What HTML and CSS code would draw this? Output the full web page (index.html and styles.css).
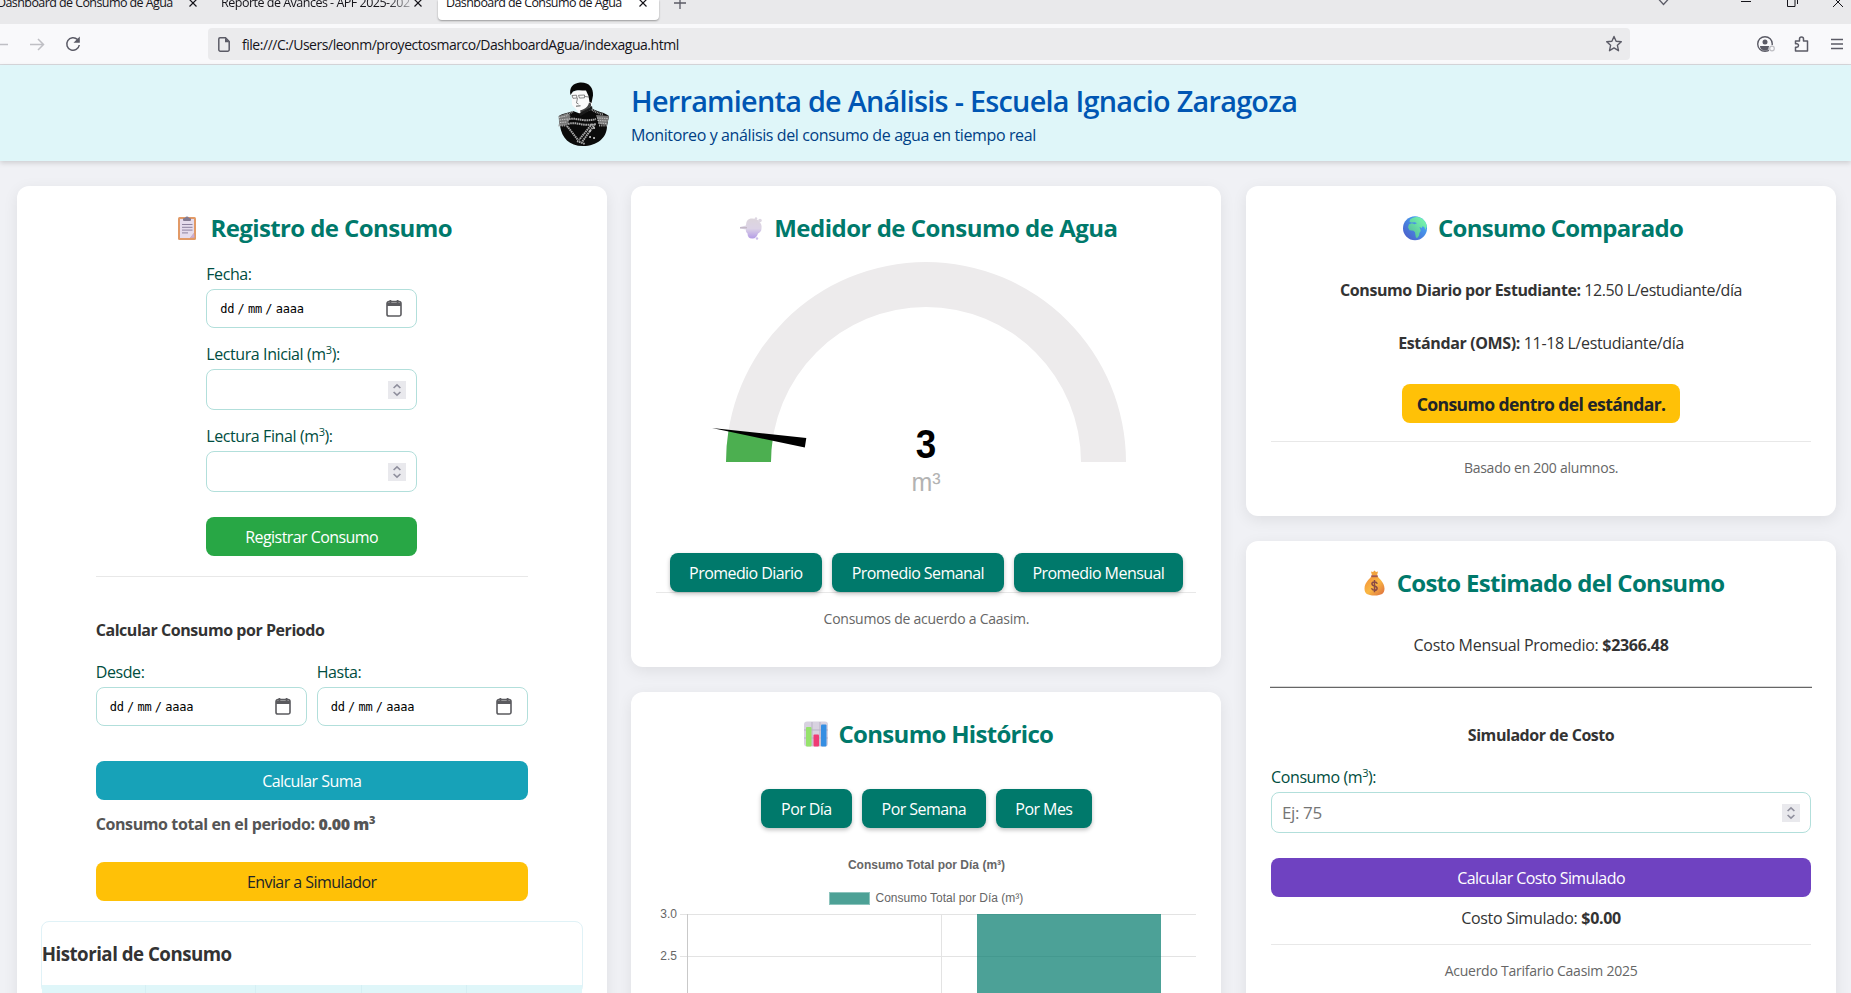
FILE: index.html
```html
<!DOCTYPE html>
<html lang="es">
<head>
<meta charset="utf-8">
<title>Dashboard de Consumo de Agua</title>
<link rel="stylesheet" href="styles.css">
</head>
<body>
<svg class="defs" width="0" height="0">
  <defs>
    <symbol id="calendar" viewBox="0 0 16 17"><path d="M3 1.500h10a2 2 0 0 1 2 2v10.700a1.800 1.800 0 0 1-1.800 1.800H2.800A1.800 1.800 0 0 1 1 14.200V3.500a2 2 0 0 1 2-2z" fill="none" stroke="#5b5b5f" stroke-width="1.600"/><path d="M1 2.500h14v3.500H1zM3.500 0h1.800v3H3.500zM10.700 0h1.800v3h-1.800z" fill="#5b5b5f"/></symbol>
    <symbol id="spin" viewBox="0 0 18 18"><path d="M0 0h18v18H0z" fill="#e9e9ed"/><path d="M5.600 7 9 3.800 12.400 7M5.600 11 9 14.200 12.400 11" fill="none" stroke="#8f8f9d" stroke-width="1.600"/></symbol>
    <linearGradient id="globeSea" x1="1" y1="0" x2="0" y2="1"><stop offset="0" stop-color="#42b8ff"/><stop offset="1" stop-color="#4d55c4"/></linearGradient>
    <linearGradient id="globeLand" x1="1" y1="0" x2="0" y2="1"><stop offset="0" stop-color="#7dffb0"/><stop offset="1" stop-color="#4fb39a"/></linearGradient>
    <linearGradient id="bagGold" x1="0" y1="0" x2="1" y2="1"><stop offset="0" stop-color="#f28c3c"/><stop offset=".5" stop-color="#fab843"/><stop offset="1" stop-color="#dc6b3e"/></linearGradient>
    <linearGradient id="puff" x1="0" y1="0" x2="0" y2="1"><stop offset="0" stop-color="#dcd5dc"/><stop offset=".5" stop-color="#dcd3e6"/><stop offset="1" stop-color="#b39be6"/></linearGradient>
  </defs>
</svg>

<div class="browser">
  <div class="tabs">
    <div class="tab tab-first"><span class="tab-name">Dashboard de Consumo de Agua</span><svg class="tab-x" viewBox="0 0 8 8"><path d="M.5.500l7 7M7.500.500l-7 7"/></svg></div>
    <div class="tab tab-second"><span class="tab-name">Reporte de Avances - APF 2025-202</span><svg class="tab-x" viewBox="0 0 8 8"><path d="M.5.500l7 7M7.500.500l-7 7"/></svg></div>
    <div class="tab tab-active"><span class="tab-name">Dashboard de Consumo de Agua</span><svg class="tab-x" viewBox="0 0 8 8"><path d="M.5.500l7 7M7.500.500l-7 7"/></svg></div>
    <svg class="tab-new" width="12" height="12" viewBox="0 0 12 12"><path d="M6 0v12M0 6h12" stroke="#5b5b66" stroke-width="1.300"/></svg>
    <svg class="window-controls" width="200" height="24" viewBox="0 0 200 24" fill="none">
      <path d="M7.500-1l5 5.500 5-5.500" stroke="#5b5b66" stroke-width="1.300"/>
      <path d="M90 1.500h10" stroke="#15141a"/>
      <path d="M136.500-2v8.500h7.500V-2M146.500-2v6" stroke="#15141a"/>
      <path d="M182-3l10 10M192-3l-10 10" stroke="#15141a"/>
    </svg>
  </div>
  <div class="toolbar">
    <svg class="nav-icons" width="90" height="40" viewBox="0 0 90 40" fill="none">
      <path d="M-5 20.500H8" stroke="#bfbfc4" stroke-width="1.500"/>
      <path d="M30 20.500h13M38 15l5.500 5.500L38 26" stroke="#bfbfc4" stroke-width="1.500"/>
      <path d="M77.500 15.500A6.300 6.300 0 1 0 79.300 21" stroke="#5b5b66" stroke-width="1.500"/><path d="M79.800 12.500v6.300h-6.300z" fill="#5b5b66"/>
    </svg>
    <div class="urlbar">
      <svg width="12" height="15" viewBox="0 0 12 15"><path d="M2 .8h5.500L11.200 4.500v8.200a1.500 1.500 0 0 1-1.500 1.500H2.300a1.500 1.500 0 0 1-1.500-1.500V2A1.200 1.200 0 0 1 2 .8z" fill="none" stroke="#5b5b66" stroke-width="1.500"/><path d="M7 .8v4.400h4.500z" fill="#5b5b66"/></svg>
      <span class="url">file:///C:/Users/leonm/proyectosmarco/DashboardAgua/indexagua.html</span>
      <svg class="star" width="18" height="18" viewBox="0 0 18 18"><path d="M9 1.500l2.100 4.800 5.200.5-3.900 3.500 1.100 5.400L9 12.900l-4.500 2.800 1.100-5.400-3.900-3.500 5.200-.5z" fill="none" stroke="#5b5b66" stroke-width="1.400" stroke-linejoin="round"/></svg>
    </div>
    <svg class="tool-icons" width="110" height="40" viewBox="0 0 110 40" fill="none">
      <circle cx="24" cy="20" r="7.300" stroke="#5b5b66" stroke-width="1.400"/><circle cx="24" cy="18" r="2.500" fill="#5b5b66"/><path d="M19 22h10c0 3-2.500 4.500-5 4.500S19 25 19 22z" fill="#5b5b66"/><circle cx="31" cy="24.500" r="3.500" fill="#f9f9fb"/><circle cx="31" cy="24.500" r="2.300" stroke="#bfbfc4" stroke-width="1.200"/>
      <path d="M54.500 17h4v-2a2 2 0 0 1 4 0v2h4v10h-12v-3.800h1.300a1.700 1.700 0 0 0 0-3.400h-1.300z" stroke="#5b5b66" stroke-width="1.500" stroke-linejoin="round"/>
      <path d="M90 15.500h12M90 20h12M90 24.500h12" stroke="#5b5b66" stroke-width="1.300"/>
    </svg>
  </div>
</div>

<header class="site-header">
  <svg class="portrait" width="57" height="76" viewBox="5 -1 57 76">
    <path d="M10 40c4-3 9-3 14-5l8 3 12-5c5 3 11 3 16 7l-2 10c0 12-10 20-24 20S13 62 11 50z" fill="#0b0b0b"/>
    <path d="M9.500 40l9-3 3 3-3 9-8 1zM47 39l13 1-2 9-8-1z" fill="#777"/>
    <path d="M10 41.500l9-2M10.500 44l8-1M11 46.500l7-.5M48 42l11 .5M48.500 44.500l10 .5M49 47l9 .5" stroke="#c4c4c4" stroke-dasharray="1.500 .8"/>
    <path d="M9.500 49.500l8 0M50 49.500l8 0M24 35.500l-7 4M43 34l6 3 5 1.500" stroke="#a0a0a0" stroke-width="2" stroke-dasharray="1 .8"/>
    <path d="M18 44c8-4 15 3 29-1M19 48c8-3 15 3 28 0M46 48 33 66M43 48 30 64M18 50l11 14M28 65l8 3" stroke="#a8a8a8" stroke-width="2" fill="none" stroke-dasharray="1.600 .6"/>
    <path d="M41 55h.1M45 52h.1M41 61h.1M45 62h.1" stroke="#ccc" stroke-width="2" stroke-linecap="round"/>
    <path d="M22.500 17l.5 12 3 3 5 6 12-9V16l-8-3-8 2z" fill="#fafafa"/>
    <path d="M21.500 19C19.800 12 24 7 31 6.500c9-.5 13.500 5 13 13l-1.500 7.500-2-1-1-6-2.500-5.500c-5 0-9-1-13 1z" fill="#070707"/>
    <path d="M23 19.500l4.500-.3.500 2.800-4 .3zM29.500 19.300l6-.3v2.800l-5 .3zM36 20.500l4 .5M28.500 22l-1 5 2 1" stroke="#555" stroke-width=".7" fill="none"/>
    <path d="M27 30.200l4.500-.4" stroke="#444" stroke-width=".9"/>
    <path d="M31 34.500c4-1 8-3 9-8l2 1v3l-10 7z" fill="#444"/>
    <path d="M30 37.500l13-7.500.5 3-12 7z" fill="#1b1b1b"/>
  </svg>
  <div class="header-text">
    <h1>Herramienta de Análisis - Escuela Ignacio Zaragoza</h1>
    <p>Monitoreo y análisis del consumo de agua en tiempo real</p>
  </div>
</header>

<main class="dashboard">
  <div class="column">
    <section class="card">
      <h2 class="t-registro">
        <svg class="emoji" width="24" height="26" viewBox="0 0 24 26"><rect x="3" y="2" width="18" height="23" rx="1.500" fill="#e29a67"/><path d="M5 4h14v14l-4 5H5z" fill="#e5dced"/><path d="M19 18l-4 5 4.500-.5z" fill="#c8aed8"/><path d="M8 5V3.500l2.200-.7a1.900 1.900 0 0 1 3.600 0l2.200.7V5a1 1 0 0 1-1 1H9a1 1 0 0 1-1-1z" fill="#837b91"/><path d="M7 9.500h10.500M7 12.300h10.500M7 15.100h10.500M7 17.900h6" stroke="#8d829f" stroke-width="1"/></svg>
        <span>Registro de Consumo</span></h2>
      <div class="form-narrow">
        <label>Fecha:</label>
        <div class="field date"><span>dd / mm / aaaa</span><svg width="16" height="17"><use href="#calendar"/></svg></div>
        <label>Lectura Inicial (m<sup>3</sup>):</label>
        <div class="field number"><span></span><svg width="18" height="18"><use href="#spin"/></svg></div>
        <label>Lectura Final (m<sup>3</sup>):</label>
        <div class="field number"><span></span><svg width="18" height="18"><use href="#spin"/></svg></div>
        <button class="btn green">Registrar Consumo</button>
      </div>
      <div class="period">
        <h4>Calcular Consumo por Periodo</h4>
        <div class="pair">
          <div><label>Desde:</label><div class="field date"><span>dd / mm / aaaa</span><svg width="16" height="17"><use href="#calendar"/></svg></div></div>
          <div><label>Hasta:</label><div class="field date"><span>dd / mm / aaaa</span><svg width="16" height="17"><use href="#calendar"/></svg></div></div>
        </div>
        <button class="btn cyan">Calcular Suma</button>
        <p class="total">Consumo total en el periodo: <b>0.00 m<sup>3</sup></b></p>
        <button class="btn amber">Enviar a Simulador</button>
      </div>
      <div class="history">
        <h3>Historial de Consumo</h3>
        <div class="history-head"><i></i><i></i><i></i><i></i><i></i></div>
      </div>
    </section>
  </div>

  <div class="column">
    <section class="card meter">
      <h2 class="t-medidor">
        <svg class="emoji" width="24" height="26" viewBox="0 0 24 26"><path d="M1 12l6-1.500C7 6 9 3.500 13 3.500c4 0 6 1 7 3 2 1.500 3 4 2.500 7 0 3-2 4-3.500 5-1 3-3 5.500-6 5-3 0-4.500-2-4.500-5C7 17 6.500 16 7 14.500L1 13.500z" fill="url(#puff)"/><circle cx="17" cy="3.500" r="1.200" fill="#ddd6e2"/><circle cx="21" cy="5.500" r="1.800" fill="#ddd6e2"/><circle cx="18" cy="23.500" r="1.200" fill="#cbbdeb"/><path d="M1 12.800h7" stroke="#b9aebb"/></svg>
        <span>Medidor de Consumo de Agua</span></h2>
      <svg class="gauge" width="540" height="307" viewBox="656 246 540 307">
        <path d="M726 462A200 200 0 0 1 1126 462H1081A155 155 0 0 0 771 462z" fill="#edebec"/>
        <path d="M726 462A200 200 0 0 1 728.460 430.710L772.900 437.750A155 155 0 0 0 771 462z" fill="#4caf50"/>
        <path d="M712 428l94.300 10-1.500 9.600z"/>
        <text class="gauge-value" x="926" y="457.500" text-anchor="middle" textLength="20.500" lengthAdjust="spacingAndGlyphs">3</text>
        <text class="gauge-unit" x="926" y="491" text-anchor="middle">m³</text>
      </svg>
      <div class="buttons wide"><button class="btn teal">Promedio Diario</button><button class="btn teal">Promedio Semanal</button><button class="btn teal">Promedio Mensual</button></div>
      <p class="note">Consumos de acuerdo a Caasim.</p>
    </section>
    <section class="card">
      <h2 class="t-historico">
        <svg class="emoji" width="24" height="26" viewBox="0 0 24 26"><rect width="24" height="25" y=".5" rx="3" fill="#d8d2e0"/><path d="M8 1v24M16 1v24M0 9h24M0 17h24" stroke="#b9b1c6"/><rect x="2" y="6" width="5.500" height="19.500" rx="1" fill="#96e26c"/><rect x="9.500" y="13.500" width="5.500" height="12" rx="1" fill="#ef3b75"/><rect x="17" y="3.500" width="5.500" height="22" rx="1" fill="#358ee2"/></svg>
        <span>Consumo Histórico</span></h2>
      <div class="buttons history-buttons"><button class="btn teal">Por Día</button><button class="btn teal">Por Semana</button><button class="btn teal">Por Mes</button></div>
      <svg class="chart" width="540" height="165" viewBox="656 828 540 165">
        <text class="chart-title" x="926.500" y="869" text-anchor="middle">Consumo Total por Día (m³)</text>
        <rect x="829.500" y="892.500" width="40" height="12" fill="#4da196" stroke="#8dc4bd"/>
        <text class="chart-text" x="875.500" y="902">Consumo Total por Día (m³)</text>
        <path d="M680 914.500h516M680 956.500h516M941.500 914v100" stroke="#e3e3e3"/>
        <path d="M687.500 914v100" stroke="#c9c9c9"/>
        <rect x="977" y="914" width="184" height="100" fill="#00796b" fill-opacity=".7"/>
        <text class="chart-text" x="677" y="918" text-anchor="end">3.0</text>
        <text class="chart-text" x="677" y="960" text-anchor="end">2.5</text>
      </svg>
    </section>
  </div>

  <div class="column">
    <section class="card compare">
      <h2 class="t-comparado">
        <svg class="emoji" width="24" height="26" viewBox="0 0 24 26"><circle cx="12" cy="13.300" r="12" fill="url(#globeSea)"/><path d="M7 4.500c3-2.500 7-3.500 11-1.500 3 1.500 5 4.500 5.800 8l-1.300 4-1.300-3-1.700-.8-1 2-1.500-1.200-.5.500 1 2.200c.5 1 0 2-1 3l-.5 3-2 2.500-1.200-1-.8-5-1.500-1.500-4-.5-1.500-3 1-3 3-1 2.500 1 2.500-1-2-1-3.500.3-2-.5z" fill="url(#globeLand)"/></svg>
        <span>Consumo Comparado</span></h2>
      <p class="p1"><b>Consumo Diario por Estudiante:</b> 12.50 L/estudiante/día</p>
      <p class="p2"><b>Estándar (OMS):</b> 11-18 L/estudiante/día</p>
      <div class="badge">Consumo dentro del estándar.</div>
      <p class="note">Basado en 200 alumnos.</p>
    </section>
    <section class="card cost">
      <h2 class="t-costo">
        <svg class="emoji" width="24" height="26" viewBox="0 0 24 26"><path d="M9 1.500l2 .5 1.500-1.500L14 2l2-.5-1 4h-5z" fill="#f2a33c"/><path d="M9.500 6h6c.5 2 7 6 7 12.500 0 5-3 7-10 7s-10-2-10-7C2.500 12 9 8 9.500 6z" fill="url(#bagGold)"/><path d="M9.300 5.200h6.400v2H9.300z" fill="#a5584a"/><path d="M15.300 13.700c-.5-1.300-1.400-1.800-2.800-1.800-3.300 0-3.600 3.300 0 4.100 3.600.8 3.300 4.300 0 4.300-1.600 0-2.500-.7-3-2M12.500 10v12.300" fill="none" stroke="#8a4b45" stroke-width="1.500"/></svg>
        <span>Costo Estimado del Consumo</span></h2>
      <p class="average">Costo Mensual Promedio: <b>$2366.48</b></p>
      <hr>
      <h4>Simulador de Costo</h4>
      <label>Consumo (m<sup>3</sup>):</label>
      <div class="field number"><span>Ej: 75</span><svg width="18" height="18"><use href="#spin"/></svg></div>
      <button class="btn purple">Calcular Costo Simulado</button>
      <p class="simulated">Costo Simulado: <b>$0.00</b></p>
      <p class="note">Acuerdo Tarifario Caasim 2025</p>
    </section>
  </div>
</main>
</body>
</html>
```
FILE: styles.css
```css
* { box-sizing: border-box; }
html, body { height: 993px; overflow: hidden; }
body {
  margin: 0;
  background: #f0f1f5;
  color: #333;
  font: 16px/24px "Open Sans", "Noto Sans", sans-serif;
  letter-spacing: -0.4px;
}
h1, h2, h3, h4, p { margin: 0; }
svg { display: block; flex: none; }
.defs { position: absolute; }
sup { font-size: 11px; line-height: 0; vertical-align: 6px; }

/* Browser frame */
.browser { height: 65px; background: #f9f9fb; border-bottom: 1px solid #d9d9dd; }
.tabs { height: 24px; background: #e9e9eb; display: flex; align-items: flex-start; overflow: hidden; font-size: 12.5px; line-height: 18px; letter-spacing: -.58px; color: #15141a; }
.tab { display: flex; height: 20px; white-space: nowrap; flex: none; }
.tab-name { margin-top: -6px; }
.tab-x { width: 8px; height: 8px; margin-top: -1px; margin-left: auto; }
.tab-x path { stroke: #15141a; stroke-width: 1.2; }
.tab-first { width: 200px; margin-left: -3px; }
.tab-second { width: 201px; margin-left: 24px; letter-spacing: -.5px; }
.tab-second .tab-name { -webkit-mask-image: linear-gradient(90deg, #000 88%, transparent 105%); mask-image: linear-gradient(90deg, #000 88%, transparent 105%); }
.tab-active { width: 221px; margin-left: 16px; padding: 0 12px 0 8px; background: #fff; border-radius: 0 0 4px 4px; box-shadow: 0 1px 2px rgba(0,0,0,.35); }
.tab-new { margin: -3px 0 0 15px; }
.window-controls { margin-left: auto; }
.toolbar { height: 40px; display: flex; align-items: center; }
.urlbar { margin-left: 118px; width: 1422px; height: 32px; border-radius: 4px; background: #ebebed; display: flex; align-items: center; padding: 0 7px 0 10px; }
.url { margin-left: 12px; padding-top: 2px; font-size: 14px; color: #15141a; letter-spacing: -.47px; }
.star { margin-left: auto; }
.tool-icons { margin-left: auto; }

/* Header */
.site-header { height: 96px; background: #dff6f9; display: flex; justify-content: center; align-items: center; gap: 20px; box-shadow: 0 2px 5px rgba(0,0,0,.15); }
.portrait { margin-top: -1px; }
.header-text { width: 666px; padding-top: 2px; white-space: nowrap; }
.header-text h1 { font-size: 28.8px; line-height: 40px; font-weight: 600; color: #0056b3; letter-spacing: -.74px; }
.header-text p { color: #004085; line-height: 24px; margin: 2px 0 0; letter-spacing: -.38px; }

/* Cards */
.dashboard { display: grid; grid-template-columns: repeat(3, 590px); column-gap: 24.7px; padding: 25px 0 0 16.7px; }
.column { display: flex; flex-direction: column; gap: 25px; }
.card { background: #fff; border-radius: 12px; padding: 24px 25px 37px; box-shadow: 0 4px 15px rgba(0,0,0,.08); }
h2 { height: 36px; padding-left: 4px; display: flex; justify-content: center; align-items: center; gap: 11px; color: #00796b; font-size: 24px; line-height: 36px; font-weight: 700; letter-spacing: -.7px; white-space: nowrap; }
.t-registro { letter-spacing: -.6px; }
.t-medidor { letter-spacing: -.5px; }
h4 { font-size: 16px; font-weight: 700; line-height: 24px; letter-spacing: -.45px; }
label { display: block; color: #004d40; height: 25px; margin-bottom: 2px; white-space: nowrap; }
.field { border: 1px solid #b2dfdb; border-radius: 8px; background: #fff; display: flex; align-items: center; justify-content: space-between; }
.date { height: 39px; padding: 0 14.5px 0 13px; font: 12px "DejaVu Sans Mono", monospace; letter-spacing: -.2px; word-spacing: -3.7px; color: #000; }
.number { height: 41px; padding: 0 10px; color: #757575; font-size: 17px; }
.btn { display: block; width: 100%; height: 39px; padding: 0; border: 0; border-radius: 8px; color: #fff; font: 16px "Open Sans", "Noto Sans", sans-serif; letter-spacing: -.56px; white-space: nowrap; }
.green { background: #28a745; }
.cyan { background: #17a2b8; }
.amber { background: #ffc107; color: #212529; }
.purple { background: #6f42c1; }
.teal { background: #00796b; box-shadow: 0 2px 4px rgba(0,0,0,.25); }

.form-narrow { width: 211px; margin: 16px auto 0; }
.form-narrow .field { margin-bottom: 14px; }
.form-narrow .btn { margin-top: 25px; }
.period { width: 432px; margin: 20px auto 0; padding-top: 41px; border-top: 1px solid #e8e8e8; }
.pair { display: grid; grid-template-columns: 1fr 1fr; gap: 10px; margin: 18px 0 35px; }
.total { margin: 12px 0 26px; color: #555; font-weight: 700; white-space: nowrap; }
.history { margin: 20px -1px 0; border: 1px solid #e0f2f7; border-radius: 8px; }
.history h3 { margin: 18px 0 17px; font-size: 18.7px; line-height: 28px; letter-spacing: -.5px; }
.history-head { height: 8px; background: #dff6f9; display: grid; grid-template-columns: 104px 110px 106px 105px 1fr; }
.history-head i { border-right: 1px solid #d5eff4; }
.history-head i:last-child { border: 0; }

.gauge, .chart { margin: 0 auto; }
.gauge-value { font: 700 40px "Liberation Sans", Arial, sans-serif; letter-spacing: 0; }
.gauge-unit { font: 25px "Liberation Sans", Arial, sans-serif; fill: #b3b3b3; letter-spacing: 0; }
.chart-title, .chart-text { font: 12px "Liberation Sans", Arial, sans-serif; fill: #666; letter-spacing: 0; }
.chart-title { font-weight: 700; }
.buttons { display: grid; justify-content: center; gap: 10px; }
.wide { grid-template-columns: 152px 172px 169px; position: relative; }
.history-buttons { grid-template-columns: 91px 124px 96px; margin-top: 37px; }

.note { border-top: 1px solid #e8e8e8; padding-top: 15px; font-size: 14px; line-height: 22px; letter-spacing: -.25px; color: #666; text-align: center; }
.compare, .cost { text-align: center; }
.p1 { margin-top: 32px; letter-spacing: -.43px; }
.p2 { margin: 29px 0; letter-spacing: -.36px; }
.badge { width: 278px; height: 39px; margin: 0 auto 18px; border-radius: 8px; background: #ffc107; color: #212529; font-size: 17.6px; font-weight: 700; line-height: 41px; letter-spacing: -.62px; white-space: nowrap; }
.average { margin-top: 32px; letter-spacing: -.3px; }
.cost hr { margin: 29px -1px 35px; height: 2px; border: 0; background: linear-gradient(#d8d8d8 50%, #666 50%); }
.cost label { text-align: left; margin-top: 18px; }
.cost .btn { margin-top: 25px; }
.simulated { margin: 9px 0 14px; letter-spacing: -.3px; }
```
